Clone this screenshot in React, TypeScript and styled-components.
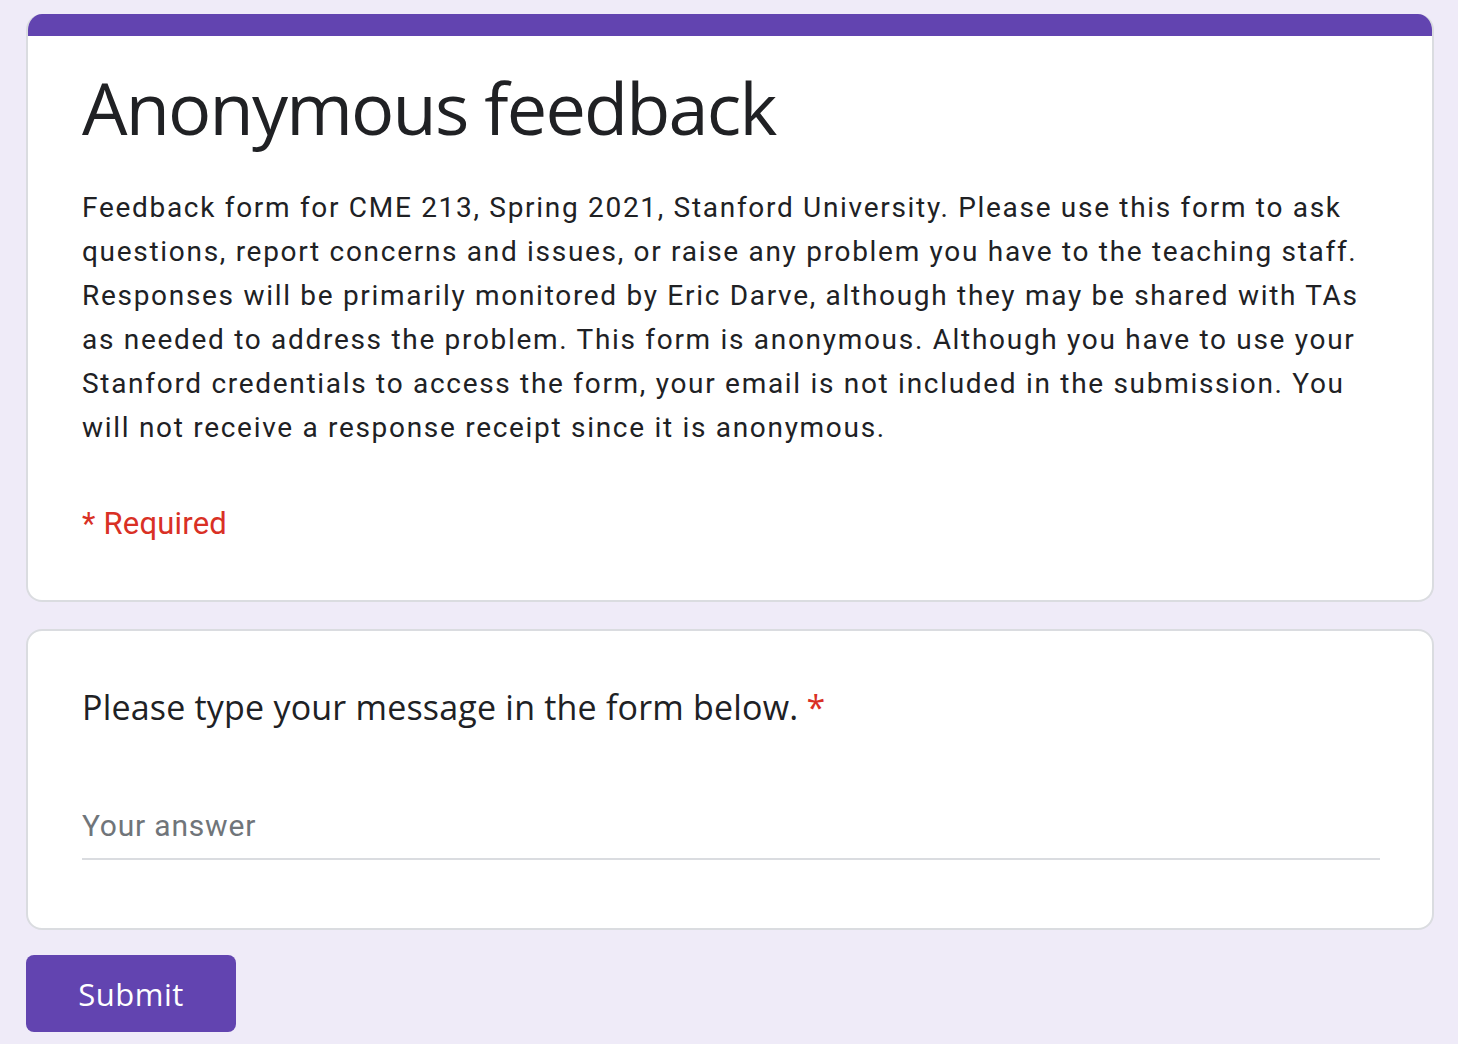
import styled, { createGlobalStyle } from "styled-components";

const GlobalStyle = createGlobalStyle`
  html, body {
    margin: 0;
    padding: 0;
    background: #efebf8;
  }
  body {
    font-family: Roboto, "Liberation Sans", sans-serif;
    color: #202124;
  }
`;

const Page = styled.div`
  display: flex;
  flex-direction: column;
  padding: 14px 24px 14px 26px;
  gap: 27px;
  min-height: 1044px;
  box-sizing: border-box;
`;

const Card = styled.section<{ $accent?: boolean }>`
  background: #fff;
  border: 2px solid #dadce0;
  border-top: ${(p) => (p.$accent ? "none" : "2px solid #dadce0")};
  border-radius: 16px;
  overflow: hidden;
  display: flex;
  flex-direction: column;
`;

const AccentBar = styled.div`
  height: 22px;
  background: #6244b0;
  margin: 0 -2px;
`;

const HeaderBody = styled.div`
  padding: 25px 52px 54px 54px;
`;

const Title = styled.h1`
  margin: 0;
  font-family: "Open Sans", Inter, sans-serif;
  font-weight: 400;
  font-size: 72px;
  line-height: 92px;
  letter-spacing: -1.8px;
  color: #202124;
`;

const Description = styled.p`
  margin: 33px 0 0;
  font-size: 28px;
  line-height: 44px;
  color: #202124;
  letter-spacing: 1.7px;
`;

const Required = styled.div`
  margin-top: 52px;
  font-size: 31px;
  line-height: 44px;
  letter-spacing: 0.2px;
  color: #d93025;
`;

const QuestionBody = styled.div`
  padding: 52px 52px 68px 54px;
`;

const Question = styled.div`
  font-family: "Open Sans", Inter, sans-serif;
  font-size: 34px;
  line-height: 48px;
  letter-spacing: 0.2px;
  color: #202124;
`;

const Star = styled.span`
  color: #d93025;
  margin-left: 8px;
`;

const AnswerInput = styled.input`
  display: block;
  width: 100%;
  box-sizing: border-box;
  margin-top: 73px;
  padding: 0 0 10px;
  border: none;
  border-bottom: 2px solid #dadce0;
  outline: none;
  background: transparent;
  font-family: Roboto, "Liberation Sans", sans-serif;
  font-size: 30px;
  line-height: 44px;
  letter-spacing: 0.8px;
  color: #202124;

  &::placeholder {
    color: #70757a;
  }
`;

const Actions = styled.div`
  display: flex;
  margin-top: -2px;
`;

const SubmitButton = styled.button`
  width: 210px;
  height: 77px;
  border: none;
  border-radius: 8px;
  background: #6244b0;
  color: #fff;
  font-family: "Open Sans", Inter, sans-serif;
  font-size: 31px;
  font-weight: 500;
  letter-spacing: 0.5px;
  cursor: pointer;
`;

export default function App() {
  return (
    <>
      <GlobalStyle />
      <Page>
        <Card $accent>
          <AccentBar />
          <HeaderBody>
            <Title>Anonymous feedback</Title>
            <Description>
              Feedback form for CME 213, Spring 2021, Stanford University. Please use this form to ask
              questions, report concerns and issues, or raise any problem you have to the teaching staff.
              Responses will be primarily monitored by Eric Darve, although they may be shared with TAs
              as needed to address the problem. This form is anonymous. Although you have to use your
              Stanford credentials to access the form, your email is not included in the submission. You
              will not receive a response receipt since it is anonymous.
            </Description>
            <Required>* Required</Required>
          </HeaderBody>
        </Card>
        <Card>
          <QuestionBody>
            <Question>
              Please type your message in the form below.<Star>*</Star>
            </Question>
            <AnswerInput placeholder="Your answer" />
          </QuestionBody>
        </Card>
        <Actions>
          <SubmitButton>Submit</SubmitButton>
        </Actions>
      </Page>
    </>
  );
}
